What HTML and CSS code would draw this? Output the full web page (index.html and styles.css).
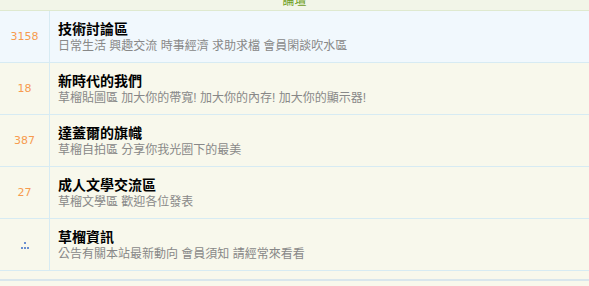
FILE: index.html
```html
<html>
<head>
    <meta charset="utf-8">
    <link rel="stylesheet" href="styles.css">
</head>
<body>
    <div class="board">
        <div class="board-head"><span>論壇</span></div>
        <div class="forum hover">
            <div class="count">3158</div>
            <div class="info">
                <div class="name">技術討論區</div>
                <div class="desc">日常生活 興趣交流 時事經濟 求助求檔 會員閑談吹水區</div>
            </div>
        </div>
        <div class="forum">
            <div class="count">18</div>
            <div class="info">
                <div class="name">新時代的我們</div>
                <div class="desc">草榴貼圖區 加大你的帶寬! 加大你的內存! 加大你的顯示器!</div>
            </div>
        </div>
        <div class="forum">
            <div class="count">387</div>
            <div class="info">
                <div class="name">達蓋爾的旗幟</div>
                <div class="desc">草榴自拍區 分享你我光圈下的最美</div>
            </div>
        </div>
        <div class="forum">
            <div class="count">27</div>
            <div class="info">
                <div class="name">成人文學交流區</div>
                <div class="desc">草榴文學區 歡迎各位發表</div>
            </div>
        </div>
        <div class="forum">
            <div class="count">
                <svg width="10" height="8" viewBox="0 0 10 8">
                    <rect x="4" y="0" width="2" height="2" fill="#6a8fd0"/>
                    <rect x="1" y="5" width="2" height="2" fill="#6a8fd0"/>
                    <rect x="4" y="5" width="2" height="2" fill="#6a8fd0"/>
                    <rect x="7" y="5" width="2" height="2" fill="#6a8fd0"/>
                </svg>
            </div>
            <div class="info">
                <div class="name">草榴資訊</div>
                <div class="desc">公告有關本站最新動向 會員須知 請經常來看看</div>
            </div>
        </div>
        <div class="board-foot"></div>
    </div>
</body>
</html>
```

FILE: styles.css
```css
body {
    margin: 0;
    background-color: #f8f8ec;
    font-family: "Liberation Sans", "Noto Sans CJK TC", sans-serif;
}
.board {
    width: 100%;
}
.board-head {
    height: 10px;
    overflow: hidden;
    background-color: #f2f5e8;
    border-bottom: 1px solid #dfe9cf;
    text-align: center;
}
.board-head span {
    display: block;
    margin-top: -6px;
    font-size: 12px;
    line-height: 14px;
    color: #6f9e24;
}
.forum {
    display: flex;
    height: 51px;
    border-bottom: 1px solid #d7ebf3;
    background-color: #f8f8ec;
}
.forum.hover {
    background-color: #f1f8fd;
}
.count {
    width: 49px;
    border-right: 1px solid #d7ebf3;
    display: flex;
    justify-content: center;
    align-items: center;
    font-family: "DejaVu Sans", sans-serif;
    font-size: 11px;
    color: #f79b4f;
}
.count svg {
    margin-top: 2px;
}
.info {
    padding: 9px 0 0 8px;
}
.name {
    font-size: 14px;
    font-weight: bold;
    line-height: 18px;
    color: #000;
}
.desc {
    font-size: 12px;
    line-height: 16px;
    color: #888;
}
.board-foot {
    height: 8px;
    border-bottom: 2px solid #d9e6ec;
}
```
